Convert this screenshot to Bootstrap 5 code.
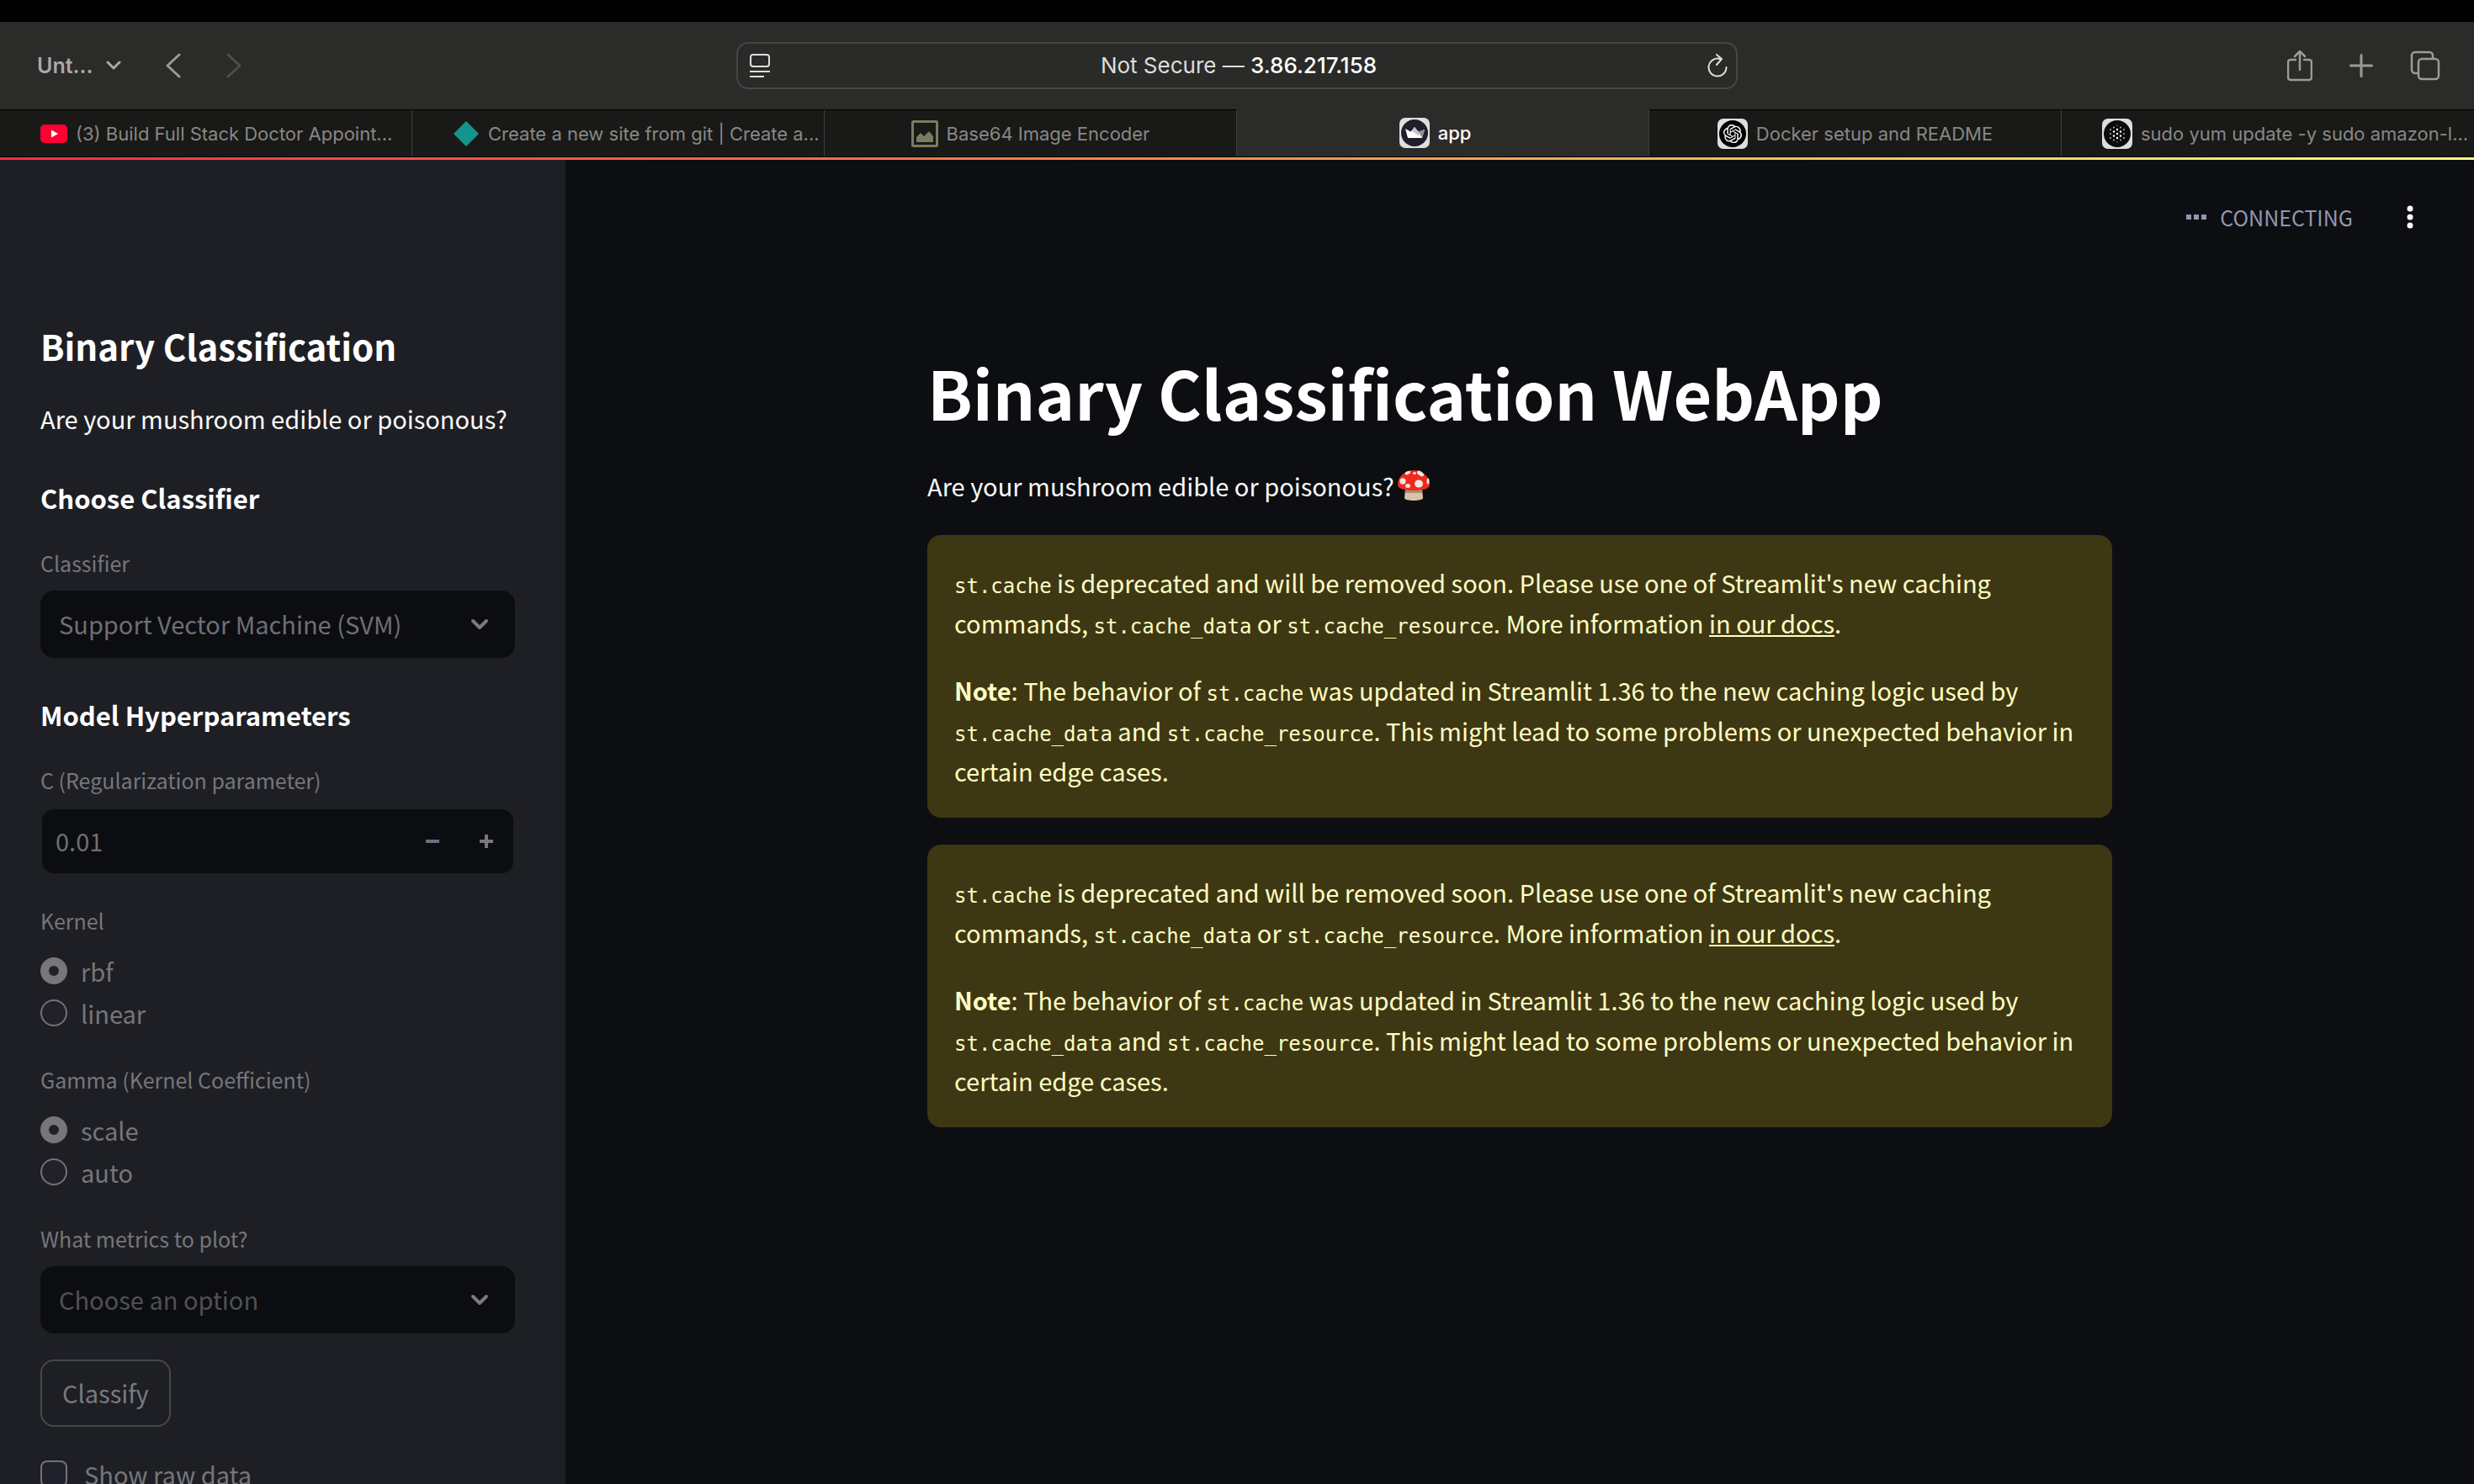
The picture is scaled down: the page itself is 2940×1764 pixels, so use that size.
<!DOCTYPE html>
<html lang="en" data-bs-theme="dark">
<head>
<meta charset="utf-8">
<meta name="viewport" content="width=device-width, initial-scale=1">
<title>app</title>
<link href="https://cdn.jsdelivr.net/npm/bootstrap@5.3.0/dist/css/bootstrap.min.css" rel="stylesheet">
<style>
:root{--ui:"Inter","Liberation Sans",sans-serif;--src:"Noto Sans CJK SC","Noto Sans",sans-serif;--code:"DejaVu Sans Mono","Liberation Mono",monospace}
body{background:#0d0e12;color:#fafafa;font-family:var(--src);font-size:29px;line-height:48px}
h1,h2,h3,p{margin:0}
svg{display:block;flex:none}
.menu-strip{height:26px;background:#000}
.toolbar{height:104px;background:#2b2b29;font-family:var(--ui);line-height:32px;padding:0 40px}
.toolbar .side{flex:1 1 0}
.toolbar .actions{gap:44px}
.tool-btn{background:none;border:0;padding:0;color:#9b9b99}
.group-btn{font-size:25px;font-weight:600;gap:16px;margin-left:4px;color:#a9a9a7}
.nav-btn{margin-left:52px}
.address{width:1190px;height:56px;border:2px solid #464645;border-radius:14px;background:#2a2a28;font-size:26px;color:#dededd;padding:0 10px 0 14px}
.address b{font-weight:500;color:#fff}
.tab-strip{height:57px;border-top:1px solid #000;border-bottom:1px solid #000;background:#191917;font-family:var(--ui);font-size:22px;line-height:28px}
.tab-item{flex:0 0 calc(100% / 6);color:#888886;text-decoration:none;border-right:1px solid #3d3d3b;padding:0 30px;gap:10px;white-space:nowrap}
.tab-item.long{padding:0 0 0 48px}
.tab-item.current{background:#2b2b29;color:#fff;margin-top:-1px;font-weight:500;padding-right:48px}
.tab-item:last-child{border-right:0}
.load-bar{height:3px;background:linear-gradient(90deg,#ff2f43,#ff7a4b 40%,#ffb65c 68%,#ffff7d)}
.side-panel{width:672px;background:#1e1f24;padding:192px 60px 0 48px}
.side-panel h2{font-size:42px;line-height:58px;font-weight:600;margin-bottom:33px}
.side-panel h3{font-size:31px;line-height:40px;font-weight:600;margin:48px 0 39px}
.side-panel .lede{margin-bottom:51px}
.field{margin-bottom:36px}
.field-label{font-size:25px;line-height:36px;color:#76767b;display:block;margin-bottom:15px}
fieldset .field-label{float:none;margin-bottom:17px}
.pick,.stepper{height:80px;border-radius:16px;border:2px solid #1e1f24;background-color:#0c0d11;color:#6f6f72;font-size:29px;line-height:48px}
.pick{border-color:#0c0d11;padding:13px 60px 15px 20px;background-image:url("data:image/svg+xml,%3Csvg xmlns='http://www.w3.org/2000/svg' viewBox='0 0 24 16'%3E%3Cpath d='M4 4l8 8 8-8' fill='none' stroke='%237a7a7d' stroke-width='4' stroke-linecap='round' stroke-linejoin='round'/%3E%3C/svg%3E");background-size:24px 16px;background-position:right 28px center}
.pick:disabled{background-color:#0c0d11;color:#6f6f72}
.pick.empty:disabled{color:#515154}
.stepper{overflow:hidden}
.stepper input,.stepper input:disabled{background:none;border:0;color:#6f6f72;font-size:29px;line-height:48px;padding:13px 16px 15px}
.step-btn{width:64px;flex:none;border:0;background:none;display:flex;align-items:center;justify-content:center;padding:0}
.choice{height:50px;gap:16px;color:#76767b}
.choice.tick{gap:20px}
.choice label{line-height:48px}
.choice .form-check-input{width:32px;height:32px;margin:0;border:2px solid #727277;background-color:#20212a;opacity:1}
.choice .form-check-input[type=radio]:checked{background-image:none;border:10px solid #77777b}
.choice .form-check-input[type=checkbox]{border-radius:8px}
.choice .form-check-label{opacity:1!important}
.run-btn{display:block;height:80px;border:2px solid #47484c;border-radius:16px;background:none;color:#7a7a7e;padding:0 24px 2px;margin:31px 0;font-size:29px;line-height:48px}
.app-bar{height:136px;padding-right:56px;color:#9297ac;font-size:25px}
.page-col{max-width:1408px;padding-top:87px}
.page-col h1{font-size:79px;line-height:106px;font-weight:700;margin-bottom:34px}
.intro{margin-bottom:35px}
.notice{background:#3e3714;color:#ffffc2;border:0;border-radius:16px;padding:32px;margin-bottom:32px}
.notice p+p{margin-top:32px}
.notice a{color:inherit;text-decoration:underline;font-weight:400}
.notice code{font-family:var(--code);font-size:24px;line-height:1;color:inherit}
</style>
</head>
<body class="vh-100 overflow-hidden d-flex flex-column">
<div class="menu-strip flex-shrink-0"></div>
<header class="toolbar d-flex align-items-center flex-shrink-0">
  <div class="side d-flex align-items-center">
    <button class="tool-btn group-btn d-flex align-items-center" type="button">Unt...<svg width="18" height="12" viewBox="0 0 18 12" fill="none" stroke="currentColor" stroke-width="3" stroke-linecap="round" stroke-linejoin="round"><path d="M2 2l7 7 7-7"/></svg></button>
    <button class="tool-btn nav-btn" type="button" aria-label="Back"><svg width="20" height="30" viewBox="0 0 20 30" fill="none" stroke="currentColor" stroke-width="3" stroke-linecap="round" stroke-linejoin="round"><path d="M17 2L3 15l14 13"/></svg></button>
    <button class="tool-btn nav-btn" type="button" aria-label="Forward"><svg width="20" height="30" viewBox="0 0 20 30" fill="none" stroke="#4d4d4b" stroke-width="3" stroke-linecap="round" stroke-linejoin="round"><path d="M3 2l14 13L3 28"/></svg></button>
  </div>
  <div class="address d-flex align-items-center justify-content-between">
    <svg width="24" height="30" viewBox="0 0 24 30" fill="none" stroke="#dededd" stroke-width="2"><rect x="1" y="2" width="22" height="14" rx="3"/><path d="M0 22h24M0 28h17"/></svg>
    <span>Not Secure — <b>3.86.217.158</b></span>
    <button class="tool-btn" type="button" aria-label="Reload"><svg width="24" height="30" viewBox="0 0 24 30" fill="none" stroke="#dededd" stroke-width="2" stroke-linecap="round" stroke-linejoin="round"><path d="M22.500 17A10.500 10.500 0 1 1 15 7M11 2l6 5-6 7"/></svg></button>
  </div>
  <div class="side actions d-flex align-items-center justify-content-end">
    <button class="tool-btn" type="button" aria-label="Share"><svg width="30" height="38" viewBox="0 0 30 38" fill="none" stroke="currentColor" stroke-width="2.500" stroke-linecap="round" stroke-linejoin="round"><path d="M10 12H4a3 3 0 0 0-3 3v18a3 3 0 0 0 3 3h22a3 3 0 0 0 3-3V15a3 3 0 0 0-3-3h-6M15 24V2M9 8l6-6 6 6"/></svg></button>
    <button class="tool-btn" type="button" aria-label="New tab"><svg width="28" height="28" viewBox="0 0 28 28" stroke="currentColor" stroke-width="3" stroke-linecap="round"><path d="M14 1.500v25M1.500 14h25"/></svg></button>
    <button class="tool-btn" type="button" aria-label="Tab overview"><svg width="36" height="36" viewBox="0 0 36 36" fill="none" stroke="currentColor" stroke-width="2.500" stroke-linejoin="round"><rect x="10" y="10" width="24" height="24" rx="4"/><path d="M10 27H6a4 4 0 0 1-4-4V6a4 4 0 0 1 4-4h17a4 4 0 0 1 4 4v4"/></svg></button>
  </div>
</header>
<nav class="tab-strip d-flex flex-shrink-0" aria-label="Tabs">
  <a href="#" class="tab-item long d-flex align-items-center"><svg width="32" height="22" viewBox="0 0 32 22"><rect width="32" height="22" rx="5" fill="#ff0033"/><path d="M13 6.500v9l8-4.500z" fill="#fff"/></svg>(3) Build Full Stack Doctor Appoint...</a>
  <a href="#" class="tab-item long d-flex align-items-center"><svg width="32" height="32" viewBox="0 0 32 32"><path d="M16 1l15 15-15 15L1 16z" fill="#14958c"/></svg>Create a new site from git | Create a...</a>
  <a href="#" class="tab-item d-flex align-items-center justify-content-center"><svg width="32" height="32" viewBox="0 0 32 32"><rect x="1.500" y="1.500" width="29" height="29" rx="1" fill="#191917" stroke="#7b7b62" stroke-width="3"/><path d="M6 26v-6l5-5 4 4 6-6 5 6v7z" fill="#7b7b62"/></svg>Base64 Image Encoder</a>
  <a href="#" class="tab-item current d-flex align-items-center justify-content-center" aria-current="page"><svg width="36" height="36" viewBox="0 0 36 36"><rect width="36" height="36" rx="7" fill="#dedede"/><circle cx="18" cy="18" r="16" fill="#1e1f2a"/><path d="M7 13l6.500 3.500L18 11l4.500 5.500L30 14l-3 10H10z" fill="#fff"/><path d="M18 11l4.500 5.500L24 22l-9-6.500z" fill="#c4c4c8"/><path d="M30 14l-7.500 2.500L27 24z" fill="#8d8d94"/></svg>app</a>
  <a href="#" class="tab-item d-flex align-items-center justify-content-center"><svg width="36" height="36" viewBox="0 0 36 36"><rect width="36" height="36" rx="7" fill="#dedede"/><circle cx="18" cy="18" r="16" fill="#000"/><path transform="translate(7 7) scale(.92)" fill="#fff" d="M22.282 9.821a5.985 5.985 0 0 0-.516-4.911 6.046 6.046 0 0 0-6.510-2.900A6.065 6.065 0 0 0 4.981 4.182a5.985 5.985 0 0 0-3.998 2.900 6.046 6.046 0 0 0 .743 7.097 5.980 5.980 0 0 0 .511 4.911 6.051 6.051 0 0 0 6.515 2.900A5.985 5.985 0 0 0 13.260 24a6.056 6.056 0 0 0 5.772-4.206 5.989 5.989 0 0 0 3.998-2.900 6.056 6.056 0 0 0-.748-7.073zm-9.022 12.608a4.476 4.476 0 0 1-2.876-1.041l.142-.080 4.778-2.758a.795.795 0 0 0 .393-.681v-6.737l2.020 1.169a.071.071 0 0 1 .038.052v5.583a4.504 4.504 0 0 1-4.495 4.494zm-9.661-4.125a4.471 4.471 0 0 1-.535-3.014l.142.085 4.783 2.758a.771.771 0 0 0 .781 0l5.843-3.369v2.332a.080.080 0 0 1-.033.062L9.740 19.950a4.499 4.499 0 0 1-6.141-1.646zM2.341 7.896a4.485 4.485 0 0 1 2.366-1.973V11.600a.766.766 0 0 0 .388.677l5.814 3.354-2.020 1.169a.076.076 0 0 1-.071 0l-4.830-2.787A4.504 4.504 0 0 1 2.341 7.872zm16.596 3.856L13.104 8.364 15.119 7.200a.076.076 0 0 1 .071 0l4.830 2.791a4.494 4.494 0 0 1-.677 8.104v-5.677a.790.790 0 0 0-.407-.667zm2.011-3.023l-.142-.085-4.774-2.782a.776.776 0 0 0-.785 0L9.409 9.230V6.897a.066.066 0 0 1 .028-.062l4.830-2.787a4.499 4.499 0 0 1 6.680 4.660zM8.307 12.863l-2.020-1.164a.080.080 0 0 1-.038-.057V6.074a4.499 4.499 0 0 1 7.376-3.454l-.142.081L8.704 5.459a.795.795 0 0 0-.393.681zm1.098-2.365l2.602-1.500 2.607 1.500v2.999l-2.597 1.500-2.607-1.500z"/></svg>Docker setup and README</a>
  <a href="#" class="tab-item long d-flex align-items-center"><svg width="36" height="36" viewBox="0 0 36 36"><rect width="36" height="36" rx="7" fill="#dedede"/><circle cx="18" cy="18" r="16" fill="#0b0b0b"/><g stroke="#fff" stroke-linecap="round" fill="none"><path stroke-width="2.500" d="M18 13v.01M18 18v.01M18 23v.01M14 15.500v.01M14 20.500v.01M22 15.500v.01M22 20.500v.01"/><path stroke-width="2" d="M14 10.500v.01M22 10.500v.01M14 25.500v.01M22 25.500v.01M10 13v.01M10 18v.01M10 23v.01M26 13v.01M26 18v.01M26 23v.01" stroke="#bbb"/><path stroke-width="1.500" stroke="#888" d="M18 8v.01M18 28v.01"/></g></svg>sudo yum update -y sudo amazon-l...</a>
</nav>
<div class="load-bar flex-shrink-0"></div>
<div class="d-flex flex-grow-1 overflow-hidden">
  <aside class="side-panel flex-shrink-0 overflow-hidden">
    <h2>Binary Classification</h2>
    <p class="lede">Are your mushroom edible or poisonous?</p>
    <h3>Choose Classifier</h3>
    <div class="field">
      <label class="field-label" for="clf">Classifier</label>
      <select class="form-select pick" id="clf" disabled><option>Support Vector Machine (SVM)</option></select>
    </div>
    <h3>Model Hyperparameters</h3>
    <div class="field">
      <label class="field-label" for="reg">C (Regularization parameter)</label>
      <div class="stepper d-flex">
        <input class="form-control" id="reg" type="text" value="0.01" disabled>
        <button class="step-btn" type="button" aria-label="Decrease" disabled><svg width="16" height="16" viewBox="0 0 16 16"><path d="M0 6h16v4H0z" fill="#6b6e84"/></svg></button>
        <button class="step-btn" type="button" aria-label="Increase" disabled><svg width="16" height="16" viewBox="0 0 16 16"><path d="M6 0h4v6h6v4h-6v6H6v-6H0V6h6z" fill="#77777a"/></svg></button>
      </div>
    </div>
    <fieldset class="field">
      <legend class="field-label">Kernel</legend>
      <div class="choice d-flex align-items-center"><input class="form-check-input" type="radio" name="kernel" id="k1" checked disabled><label class="form-check-label" for="k1">rbf</label></div>
      <div class="choice d-flex align-items-center"><input class="form-check-input" type="radio" name="kernel" id="k2" disabled><label class="form-check-label" for="k2">linear</label></div>
    </fieldset>
    <fieldset class="field">
      <legend class="field-label">Gamma (Kernel Coefficient)</legend>
      <div class="choice d-flex align-items-center"><input class="form-check-input" type="radio" name="gamma" id="g1" checked disabled><label class="form-check-label" for="g1">scale</label></div>
      <div class="choice d-flex align-items-center"><input class="form-check-input" type="radio" name="gamma" id="g2" disabled><label class="form-check-label" for="g2">auto</label></div>
    </fieldset>
    <div class="field mb-0">
      <label class="field-label" for="met">What metrics to plot?</label>
      <select class="form-select pick empty" id="met" disabled><option>Choose an option</option></select>
    </div>
    <button class="run-btn" type="button" disabled>Classify</button>
    <div class="choice tick d-flex align-items-center"><input class="form-check-input" type="checkbox" id="raw" disabled><label class="form-check-label" for="raw">Show raw data</label></div>
  </aside>
  <main class="flex-grow-1">
    <div class="app-bar d-flex align-items-center justify-content-end">
      <svg class="me-3" width="24" height="6" viewBox="0 0 24 6" fill="currentColor"><path d="M0 0h6v6H0zM9 0h6v6H9zM18 0h6v6h-6z"/></svg>
      <span>CONNECTING</span>
      <button class="tool-btn ms-5 px-3" type="button" aria-label="Main menu"><svg width="8" height="28" viewBox="0 0 8 28" fill="#fafafa"><circle cx="4" cy="4" r="3.500"/><circle cx="4" cy="14" r="3.500"/><circle cx="4" cy="24" r="3.500"/></svg></button>
    </div>
    <div class="page-col mx-auto">
      <h1>Binary Classification WebApp</h1>
      <p class="intro d-flex align-items-center">Are your mushroom edible or poisonous?<svg class="ms-1" width="38" height="38" viewBox="0 0 38 38"><path d="M9 23h20l1 11c0 4-22 4-22 0z" fill="#d9c3a5"/><path d="M9 24h20v4H9z" fill="#a98f72"/><path d="M19 1c11 0 19 8 19 17 0 5-8 7-19 7S0 23 0 18C0 9 8 1 19 1z" fill="#ee2a1f"/><g fill="#f3e6df"><ellipse cx="27" cy="5" rx="4.500" ry="2.500" transform="rotate(35 27 5)"/><ellipse cx="12" cy="4" rx="3.500" ry="1.800" transform="rotate(-25 12 4)"/><ellipse cx="20" cy="4.500" rx="2" ry="1.500"/><ellipse cx="6" cy="14" rx="3.500" ry="3.800"/><ellipse cx="25" cy="17" rx="5" ry="4.500"/><ellipse cx="12" cy="19.500" rx="3" ry="2.500"/><ellipse cx="36" cy="14" rx="1.500" ry="3.500"/></g></svg></p>
      <div class="alert notice">
        <p><code>st.cache</code> is deprecated and will be removed soon. Please use one of Streamlit's new caching commands, <code>st.cache_data</code> or <code>st.cache_resource</code>. More information <a href="#">in our docs</a>.</p>
        <p><strong>Note</strong>: The behavior of <code>st.cache</code> was updated in Streamlit 1.36 to the new caching logic used by <code>st.cache_data</code> and <code>st.cache_resource</code>. This might lead to some problems or unexpected behavior in certain edge cases.</p>
      </div>
      <div class="alert notice">
        <p><code>st.cache</code> is deprecated and will be removed soon. Please use one of Streamlit's new caching commands, <code>st.cache_data</code> or <code>st.cache_resource</code>. More information <a href="#">in our docs</a>.</p>
        <p><strong>Note</strong>: The behavior of <code>st.cache</code> was updated in Streamlit 1.36 to the new caching logic used by <code>st.cache_data</code> and <code>st.cache_resource</code>. This might lead to some problems or unexpected behavior in certain edge cases.</p>
      </div>
    </div>
  </main>
</div>
<script src="https://cdn.jsdelivr.net/npm/bootstrap@5.3.0/dist/js/bootstrap.bundle.min.js"></script>
</body>
</html>
